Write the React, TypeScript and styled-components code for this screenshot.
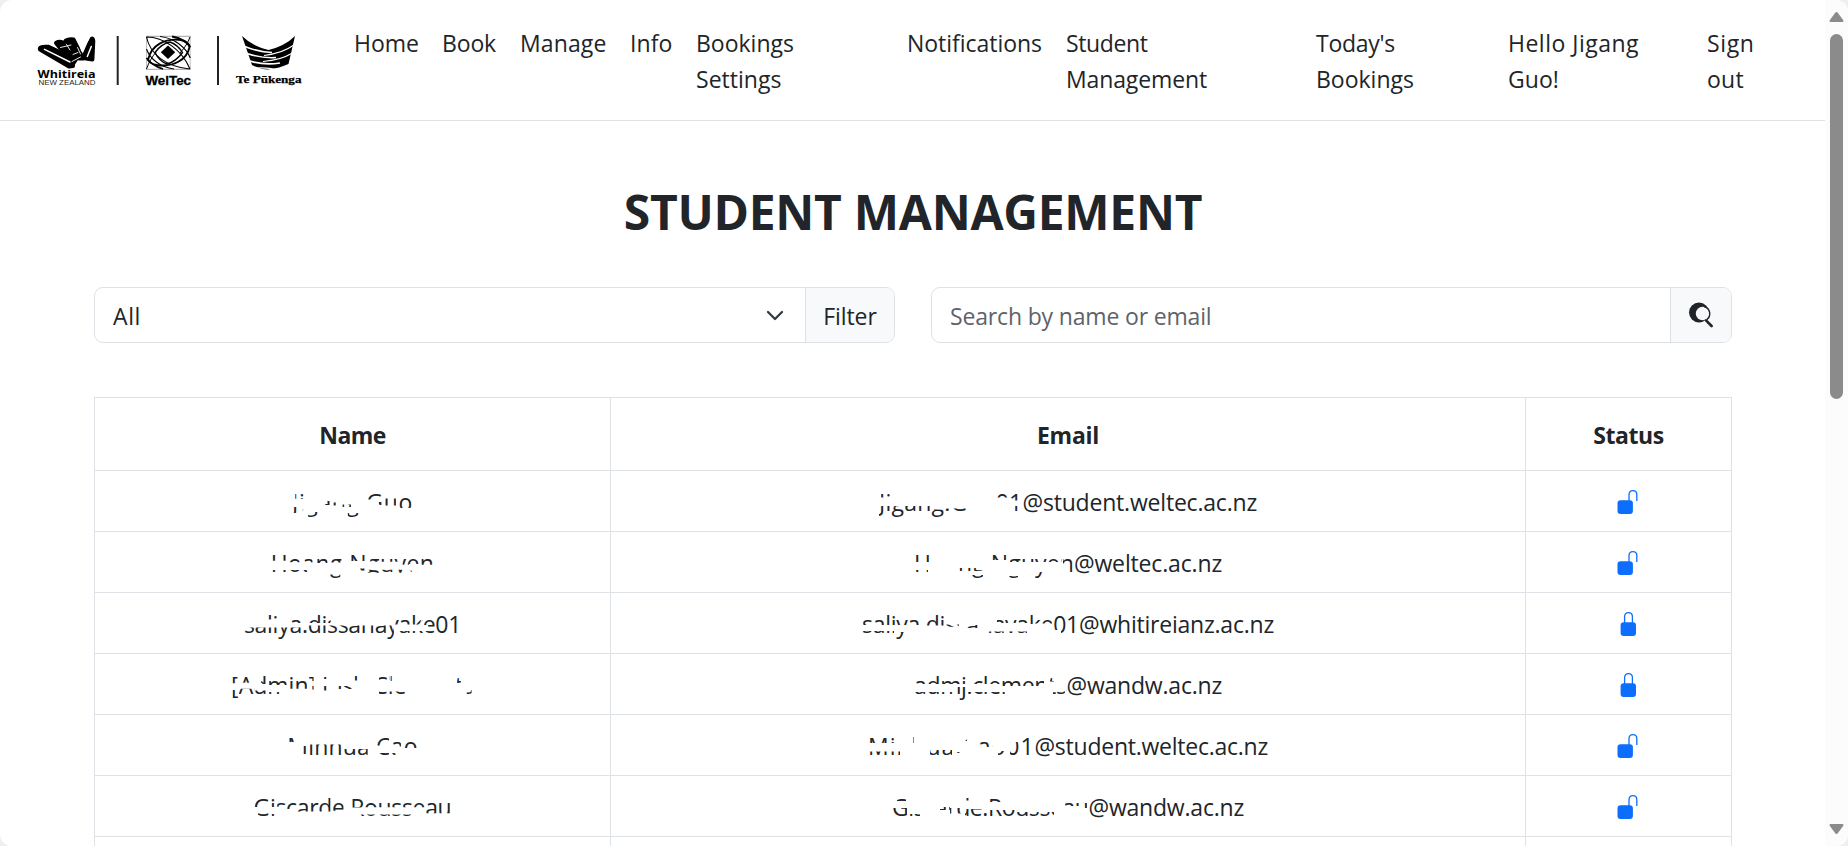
import React, { useLayoutEffect, useRef, useState } from 'react';
import styled, { createGlobalStyle } from 'styled-components';

const ink = '#212529';
const line = '#dee2e6';

const GlobalStyle = createGlobalStyle`
  * { box-sizing: border-box; }
  body {
    margin: 0;
    background: #efefef;
    color: ${ink};
    font: 23px/36px "Open Sans", "Noto Sans", sans-serif;
    overflow: hidden;
  }
`;

const Window = styled.div`
  display: flex;
  width: 1848px;
  height: 846px;
  overflow: hidden;
  border-radius: 12px;
  background: #fff;
`;

const Page = styled.div`
  width: 1825px;
  height: 846px;
  overflow: hidden;
`;

const NavBar = styled.header`
  display: flex;
  height: 121px;
  border-bottom: 1px solid ${line};
`;

const Brand = styled.a`
  display: block;
  width: 354px;
  height: 120px;
`;

const NavList = styled.nav`
  display: flex;
  padding-top: 25px;
`;

const NavItem = styled.a<{ $width: number }>`
  display: flex;
  flex-direction: column;
  align-items: flex-start;
  width: ${p => p.$width}px;
  color: ${ink};
`;

const Content = styled.main`
  width: 1638px;
  margin: 0 93px 0 94px;
`;

const Title = styled.h1`
  display: flex;
  justify-content: center;
  margin: 0;
  padding-top: 62px;
  height: 166px;
  font-size: 48px;
  line-height: 58px;
  font-weight: 700;
`;

const Filters = styled.div`
  display: flex;
  gap: 36px;
  height: 56px;
`;

const Group = styled.div<{ $width: number }>`
  display: flex;
  width: ${p => p.$width}px;
  border: 1px solid ${line};
  border-radius: 9px;
  overflow: hidden;
`;

const Field = styled.div<{ $muted?: boolean }>`
  flex: 1;
  display: flex;
  align-items: center;
  justify-content: space-between;
  padding: 2px 21px 0 18px;
  color: ${p => (p.$muted ? '#5d6369' : ink)};
`;

const GroupButton = styled.button<{ $width: number }>`
  display: flex;
  align-items: center;
  justify-content: center;
  width: ${p => p.$width}px;
  padding: 2px 0 0;
  border: 0;
  border-left: 1px solid ${line};
  background: #f8f9fa;
  color: ${ink};
  font: inherit;
`;

const SearchIcon = styled.svg`
  margin-top: -2px;
`;

const Table = styled.div`
  margin-top: 54px;
  border: 1px solid ${line};
  border-bottom: 0;
`;

const Row = styled.div<{ $head?: boolean }>`
  display: grid;
  grid-template-columns: 515px 915px 1fr;
  height: ${p => (p.$head ? 73 : 61)}px;
  border-bottom: 1px solid ${line};
  font-weight: ${p => (p.$head ? 700 : 400)};
`;

const Cell = styled.div<{ $head?: boolean }>`
  display: flex;
  justify-content: center;
  align-items: center;
  padding-top: ${p => (p.$head ? 2 : 0)}px;
  & + & { border-left: 1px solid ${line}; }
`;

const Clipped = styled.span<{ $shape: string }>`
  display: flex;
  height: 36px;
  padding-top: 1px;
  clip-path: path('${p => p.$shape}');
`;

const Text = styled.span<{ $width?: number }>`
  display: inline-block;
  white-space: pre;
  ${p => (p.$width ? `width: ${p.$width}px;` : '')}
`;

const ScrollBar = styled.div`
  display: flex;
  flex-direction: column;
  align-items: center;
  justify-content: space-between;
  width: 23px;
  padding: 12px 0 12px;
  background: #fcfcfc;
`;

const Track = styled.div`
  flex: 1;
  padding-top: 12px;
`;

const Thumb = styled.div`
  width: 13px;
  height: 365px;
  border-radius: 7px;
  background: #8b8b8b;
`;

/* Text whose tracking is adjusted so that it fills the given width. */
function Fit({ width, children }: { width: number; children: string }) {
  const ref = useRef<HTMLSpanElement>(null);
  const [gap, setGap] = useState(0);
  useLayoutEffect(() => {
    const range = document.createRange();
    range.selectNodeContents(ref.current!);
    const natural = range.getBoundingClientRect().width;
    setGap((width - natural) / children.length);
  }, [width, children]);
  return <Text ref={ref} $width={width} style={{ letterSpacing: gap }}>{children}</Text>;
}

type Box = [number, number, number, number];

const shape = (boxes: Box[], unit = 1) =>
  boxes
    .map(([l, t, r, b]) => `M${(l * unit).toFixed(1)} ${t}H${(r * unit).toFixed(1)}V${b}H${(l * unit).toFixed(1)}Z`)
    .join('');

interface Student {
  name: string;
  nameWidth: number;
  nameShown: Box[];
  user: string;
  userWidth: number;
  domain: string;
  domainWidth: number;
  mailShown: Box[];
  locked: boolean;
}

const students: Student[] = [
  {
    name: 'Jigang Guo', nameWidth: 120.8,
    nameShown: [[3, 10, 14, 15.7], [0, 24, 6.5, 30], [10, 26, 12.5, 28], [15, 29, 25, 35], [31, 18, 37, 22], [37, 19.5, 43, 22.5], [47, 21.5, 55, 24], [52, 30, 62, 35], [71, 10, 84, 16.5], [81, 19, 84, 22], [86, 15.5, 97, 22.5], [98, 15, 113, 25]],
    user: 'Jigang.Guo01', userWidth: 143.5, domain: '@student.weltec.ac.nz', domainWidth: 234.5,
    mailShown: [[2, 10, 15, 14.5], [0, 23, 54, 36], [54, 26.5, 65, 36], [66, 25.5, 88, 29], [118, 10, 130, 14.5], [131, 10, 141, 17.5], [136, 23, 140, 28.5], [143, 0, 400, 36]],
    locked: false,
  },
  {
    name: 'Hoang Nguyen', nameWidth: 163.6,
    nameShown: [[1, 10, 16, 16.7], [1, 26, 16, 29], [18, 15, 27, 18.2], [18, 26, 28, 29], [31, 15, 39, 18.5], [30, 26, 34, 29], [43, 15, 53, 19], [55, 15, 66, 18.5], [55, 30.5, 65, 35], [74.5, 10, 89, 17], [83.5, 24.5, 89, 26.5], [93, 15, 122, 17.8], [90, 25.7, 124, 28.7], [123, 15, 129, 20.7], [129, 15, 139, 20], [140, 15, 152, 20.7], [129, 26.7, 132, 28]],
    user: 'Hoang.Nguyen', userWidth: 160, domain: '@weltec.ac.nz', domainWidth: 148,
    mailShown: [[1, 10, 15.5, 18], [1, 26, 14, 28.5], [44, 24, 69, 27], [58, 31, 69, 36], [77, 10, 93, 16], [96, 14.5, 148, 18], [95, 32, 104, 36], [121, 28, 129, 36], [149, 15, 155, 19.5], [155, 15, 160, 36], [159, 0, 310, 36]],
    locked: false,
  },
  {
    name: 'saliya.dissanayake01', nameWidth: 217.2,
    nameShown: [[16, 9, 31, 14.5], [44, 9, 81, 18], [0, 22.5, 60, 36], [60, 20.5, 140, 36], [140, 10, 165, 19.5], [142, 26, 180, 29], [166, 10, 180, 20], [172, 10, 206, 29]],
    user: 'saliya.dissanayake01', userWidth: 217, domain: '@whitireianz.ac.nz', domainWidth: 195,
    mailShown: [[0, 9, 57, 20], [0, 26, 32, 29], [34, 27, 42, 36], [64, 9, 84, 20.5], [84, 19.5, 97, 21.8], [105, 20, 116, 23], [125, 26.5, 165, 28], [135, 15, 166, 18], [166, 9, 171, 19], [173, 15, 190, 18.5], [191, 10, 202, 25], [199, 10, 420, 36]],
    locked: true,
  },
  {
    name: '[Admin] Josh Clements', nameWidth: 242.8,
    nameShown: [[1, 10, 6, 17.3], [1, 24, 6.5, 33], [10, 10, 18, 16.7], [7, 22.7, 22, 28.5], [28, 9, 33.5, 18], [22.5, 24.5, 33, 28.5], [35, 14.5, 52, 19], [35, 26, 46, 28.5], [54, 10, 71, 22.7], [72, 10, 77, 15], [74, 20, 77, 23.5], [86, 10, 92, 13], [86, 20, 91, 24.5], [98, 20, 114, 23], [115, 9, 119, 14.5], [138, 10, 148, 14], [149, 9, 153, 15], [138, 25.5, 163, 29], [211, 11, 214.5, 17], [220, 24, 224.5, 28.5]],
    user: 'admj.clements', userWidth: 152.5, domain: '@wandw.ac.nz', domainWidth: 155.5,
    mailShown: [[2, 9, 52, 18], [0, 26, 45, 29], [43, 21, 52, 36], [59, 9, 75, 18], [75, 15, 86, 18], [54, 26, 91, 29], [87, 15, 130, 20], [136, 12, 140, 15.5], [139, 25.5, 151, 29], [152, 0, 310, 36]],
    locked: true,
  },
  {
    name: 'Minhua Cao', nameWidth: 130.4,
    nameShown: [[1, 10, 6.5, 15], [14, 19, 20, 27], [20, 17.5, 52, 28.5], [52, 22, 75, 28.5], [83, 10, 95, 18.5], [84, 26, 95, 29], [97, 15, 106, 19.5], [97, 26, 101, 28.5], [108, 15, 121, 21]],
    user: 'Minhua.Cao01', userWidth: 166.5, domain: '@student.weltec.ac.nz', domainWidth: 233.5,
    mailShown: [[1, 10, 27, 16], [1, 24.5, 32, 29], [42.5, 9, 46, 16], [62, 23, 84, 29], [86, 18, 92, 26], [90, 10, 99, 14], [101, 18.5, 111, 23], [112, 15, 125, 20], [130, 24, 138, 29], [142, 15, 152, 29], [152, 0, 402, 36]],
    locked: false,
  },
  {
    name: 'Giscarde Rousseau', nameWidth: 197.8,
    nameShown: [[1, 10, 14, 19], [4, 25.5, 14, 29], [16, 9, 20, 19], [16, 26, 20, 28.5], [22, 14, 31, 18.7], [31, 14, 40, 21], [40, 9, 72, 23.5], [73, 14, 84, 22.7], [92, 10, 103, 19.5], [103, 14, 168, 19.3], [100, 26.5, 147, 29], [161, 15, 185, 25.3]],
    user: 'Giscarde.Rousseau', userWidth: 196.5, domain: '@wandw.ac.nz', domainWidth: 155.5,
    mailShown: [[5, 10, 14, 13], [1, 20, 15, 29], [17, 26, 28, 29], [48, 19, 58, 22], [58, 20, 73, 25.5], [73, 9, 77, 12.5], [73, 21, 90, 28.5], [97, 10, 109, 14], [90, 22, 125, 28.5], [125, 24, 162, 28.5], [173, 15, 187, 18], [191, 15, 195, 20], [196, 0, 354, 36]],
    locked: false,
  },
];

const nav: { width: number; lines: [string, number][] }[] = [
  { width: 88, lines: [['Home', 65]] },
  { width: 78, lines: [['Book', 54]] },
  { width: 110, lines: [['Manage', 86.5]] },
  { width: 66, lines: [['Info', 42.5]] },
  { width: 211, lines: [['Bookings', 98], ['Settings', 85.5]] },
  { width: 159, lines: [['Notifications', 135]] },
  { width: 250, lines: [['Student', 81.5], ['Management', 141]] },
  { width: 192, lines: [["Today's", 79], ['Bookings', 98]] },
  { width: 199, lines: [['Hello Jigang', 131], ['Guo!', 51]] },
  { width: 60, lines: [['Sign', 47.5], ['out', 37]] },
];

function Logo() {
  return (
    <svg width="340" height="120" viewBox="0 0 340 120" fill="#000">
      <g fill="#000" stroke="#000" strokeWidth="4" strokeLinejoin="round" strokeLinecap="round">
        <path d="M83 58 L91 39.5 Q93 37 93.3 41 L92.4 59.5Z" />
        <path d="M65.5 40.8 Q69 38.6 73.5 39.5 L83 58.5 L79 58.5Z" />
        <path d="M56 43 Q59 41 63 42.5 L77 58 L73 64Z" />
        <path d="M40 49.5 Q39 46 48.5 46.8 L71.5 57.5 L73 66 L69 66.5Z" />
      </g>
      <g fill="none" stroke="#fff" strokeLinecap="round">
        <path d="M44.5 49.3 L70 62" strokeWidth="1.5" />
        <path d="M87.3 56.5 L91.3 46.5" strokeWidth="1.5" />
        <path d="M79 35 L82 48 L88 38.5" strokeWidth="3.2" />
        <path d="M60.5 47.5 L71 45 M72 61.5 L80.5 57 M66.5 44.5 L70 50 M73 54.5 L78 52.5 M77.5 47.5 L80.5 54" strokeWidth="0.9" />
      </g>
      <text x="37.5" y="78.4" fontFamily="Open Sans" fontWeight="700" fontSize="10.2" textLength="58" lengthAdjust="spacingAndGlyphs">Whitireia</text>
      <text x="38.5" y="85" fontFamily="Liberation Sans" fontSize="6.8" fill="#222" textLength="57" lengthAdjust="spacingAndGlyphs">NEW ZEALAND</text>
      <rect x="116.7" y="36" width="2" height="49" fill="#222" />
      <rect x="217" y="36" width="2" height="49" fill="#222" />
      <g fill="none" stroke="#000" strokeWidth="1.4">
        <path d="M146 36.3 H190.5 M146 69.3 H190.5" strokeWidth="0.7" stroke="#777" />
        <path d="M146.5 36 V69.5 M190.2 36 V69.5" strokeWidth="0.6" stroke="#999" />
        <path d="M148 60 C151 45 165 38 181 40 C186 41 189 44 189.5 47 C187 60 173 67.5 157 65 C152 64 149 62.5 148 60Z" strokeWidth="1.8" />
        <path d="M155 52.5 Q161 44 170 42 Q178 45 182.5 52.5 Q176 61.5 167 64 Q159 61 155 52.5Z" />
        <path d="M146.5 37 C164 37 182 50 190 69 M146.5 37 C150 54 166 67 190 69" strokeWidth="1.1" />
        <path d="M160 36.5 C174 38 186 47 190.3 58 M146.5 49 C150 59 160 67 174 69" strokeWidth="1.1" />
        <path d="M172 36.5 C180 38 187 42 190.3 47 M146.5 58 C151 64 156 67 163 69" strokeWidth="1.8" />
        <path d="M146.5 69 C149 62 152 57 156 52 M180 53 C185 47 188 43 190 37" strokeWidth="1" />
      </g>
      <path d="M168 45.5 L175.2 52.3 L168 59 L160.8 52.3Z" />
      <text x="145.5" y="85" fontFamily="Liberation Sans" fontWeight="700" fontSize="12" stroke="#000" strokeWidth="0.3" textLength="45.5" lengthAdjust="spacingAndGlyphs">WelTec</text>
      <path d="M242 36 Q252 46 268.5 50 Q285 46 295 36 L288.5 64 Q280 68 268 69.5 Q260 69.5 252 65Z" />
      <g fill="none" stroke="#fff">
        <path d="M243.5 46 Q258 52 272 52.5" strokeWidth="1.5" />
        <path d="M247 53.5 Q262 58.5 276 57.5" strokeWidth="1.5" />
        <path d="M250 61 Q264 65.5 280 63" strokeWidth="1.6" />
        <path d="M293 45.5 Q283 53 264 55.5" strokeWidth="1.1" />
        <path d="M291.5 53.5 Q281 60 263 61.5" strokeWidth="1.1" />
        <path d="M256 68 Q270 67 279 71" strokeWidth="1.2" />
      </g>
      <text x="236" y="83.3" fontFamily="Liberation Serif" fontWeight="700" fontSize="11.4" stroke="#000" strokeWidth="0.25" textLength="65.5" lengthAdjust="spacingAndGlyphs">Te Pūkenga</text>
    </svg>
  );
}

function Lock({ locked }: { locked: boolean }) {
  return (
    <svg width="24" height="36" viewBox="0 0 24 36">
      <rect x={locked ? 3.6 : 0.5} y="17.2" width="15.4" height="13.8" rx="3" fill="#0d6efd" />
      <path
        d={locked ? 'M7.6 18V11.6Q7.6 7.6 11.5 7.6Q15.4 7.6 15.4 11.6V18' : 'M12 18V11.6Q12 7.6 15.9 7.6Q19.8 7.6 19.8 11.6V18'}
        fill="none" stroke="#0d6efd" strokeWidth="1.3"
      />
    </svg>
  );
}

export default function App() {
  return (
    <>
      <GlobalStyle />
      <Window>
        <Page>
          <NavBar>
            <Brand><Logo /></Brand>
            <NavList>
              {nav.map((item, i) => (
                <NavItem key={i} $width={item.width}>
                  {item.lines.map(([text, width]) => <Fit key={text} width={width}>{text}</Fit>)}
                </NavItem>
              ))}
            </NavList>
          </NavBar>
          <Content>
            <Title><Fit width={578.5}>STUDENT MANAGEMENT</Fit></Title>
            <Filters>
              <Group $width={801}>
                <Field>
                  <Fit width={28}>All</Fit>
                  <svg width="18" height="12" viewBox="0 0 18 12">
                    <path d="M2 2L9 9L16 2" fill="none" stroke="#343a40" strokeWidth="2.3" strokeLinecap="round" strokeLinejoin="round" />
                  </svg>
                </Field>
                <GroupButton $width={89}><Fit width={53.5}>Filter</Fit></GroupButton>
              </Group>
              <Group $width={801}>
                <Field $muted><Fit width={261.5}>Search by name or email</Fit></Field>
                <GroupButton $width={61}>
                  <SearchIcon width="28" height="28" viewBox="0 0 28 28">
                    <circle cx="12" cy="11.5" r="10" fill={ink} />
                    <circle cx="15.6" cy="12.5" r="6.8" fill="#f8f9fa" />
                    <path d="M17 5.6A7.3 7.3 0 0 1 19.8 18.6" fill="none" stroke={ink} strokeWidth="1.4" />
                    <path d="M19 19.4L24.6 25" stroke={ink} strokeWidth="2.7" strokeLinecap="round" />
                  </SearchIcon>
                </GroupButton>
              </Group>
            </Filters>
            <Table>
              <Row $head>
                <Cell $head><Fit width={66.5}>Name</Fit></Cell>
                <Cell $head><Fit width={62}>Email</Fit></Cell>
                <Cell $head><Fit width={70.5}>Status</Fit></Cell>
              </Row>
              {students.map(s => (
                <Row key={s.name}>
                  <Cell>
                    <Clipped $shape={shape(s.nameShown, 1.0714)}><Fit width={s.nameWidth}>{s.name}</Fit></Clipped>
                  </Cell>
                  <Cell>
                    <Clipped $shape={shape(s.mailShown)}>
                      <Fit width={s.userWidth}>{s.user}</Fit>
                      <Fit width={s.domainWidth}>{s.domain}</Fit>
                    </Clipped>
                  </Cell>
                  <Cell><Lock locked={s.locked} /></Cell>
                </Row>
              ))}
              <Row><Cell /><Cell /><Cell /></Row>
            </Table>
          </Content>
        </Page>
        <ScrollBar>
          <svg width="15" height="10" viewBox="0 0 15 10"><path d="M6.2 .7Q7.5-.5 8.8 .7L14.3 8.3Q14.8 10 13.5 10H1.5Q.2 10 .7 8.3Z" fill="#8b8b8b" /></svg>
          <Track><Thumb /></Track>
          <svg width="15" height="10" viewBox="0 0 15 10"><path d="M6.2 9.3Q7.5 10.5 8.8 9.3L14.3 1.7Q14.8 0 13.5 0H1.5Q.2 0 .7 1.7Z" fill="#8b8b8b" /></svg>
        </ScrollBar>
      </Window>
    </>
  );
}
